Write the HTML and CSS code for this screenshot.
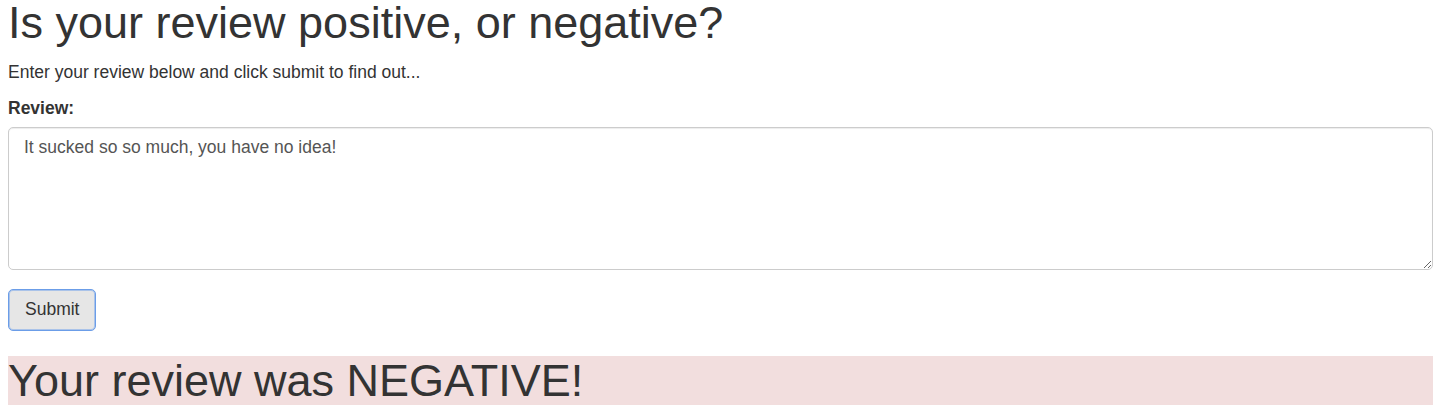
FILE: index.html
```html
<!DOCTYPE html>
<html lang="en">
<head>
<meta charset="utf-8">
<title>Review sentiment</title>
<link rel="stylesheet" href="styles.css">
</head>
<body>
<div class="page">
  <h1 class="title">Is your review positive, or negative?</h1>
  <p class="lead-text">Enter your review below and click submit to find out...</p>
  <form class="review-form">
    <div class="form-group">
      <label class="field-label" for="review">Review:</label>
      <textarea id="review" class="form-control">It sucked so so much, you have no idea!</textarea>
    </div>
    <button type="button" class="btn">Submit</button>
  </form>
  <h1 class="result result-negative">Your review was NEGATIVE!</h1>
</div>
</body>
</html>
```

FILE: styles.css
```css
* { box-sizing: border-box; }

html, body {
  margin: 0;
  padding: 0;
  background: #fff;
}

body {
  font-family: "Liberation Sans", Arial, Helvetica, sans-serif;
  font-size: 17.5px;
  line-height: 25px;
  color: #333;
}

.page {
  padding: 0 17px 0 8px;
}

.title {
  margin: 0 0 13.5px;
  font-size: 45px;
  font-weight: 500;
  line-height: 46px;
}

.lead-text {
  margin: 0 0 11px;
}

.review-form {
  margin: 0;
}

.form-group {
  margin-bottom: 19px;
}

.field-label {
  display: inline-block;
  margin-bottom: 6px;
  font-weight: 700;
}

.form-control {
  display: block;
  width: 100%;
  height: 143px;
  margin: 0;
  padding: 7px 15px;
  font-family: inherit;
  font-size: 17.5px;
  line-height: 25px;
  color: #555;
  background: #fff;
  border: 1px solid #ccc;
  border-radius: 5px;
  box-shadow: inset 0 1px 1px rgba(0,0,0,.075);
  resize: vertical;
}

.btn {
  display: inline-block;
  margin: 0;
  padding: 7.5px 16px;
  font-family: inherit;
  font-size: 17.5px;
  line-height: 25px;
  color: #333;
  background: #e6e6e6;
  border: 1px solid #6b9de8;
  border-radius: 5px;
  box-shadow: inset 0 0 0 1px rgba(120,165,235,.55);
  cursor: pointer;
}

.result {
  margin: 25px 0 0;
  font-size: 45px;
  font-weight: 500;
  line-height: 49px;
}

.result-negative {
  background: #f2dede;
}
```
